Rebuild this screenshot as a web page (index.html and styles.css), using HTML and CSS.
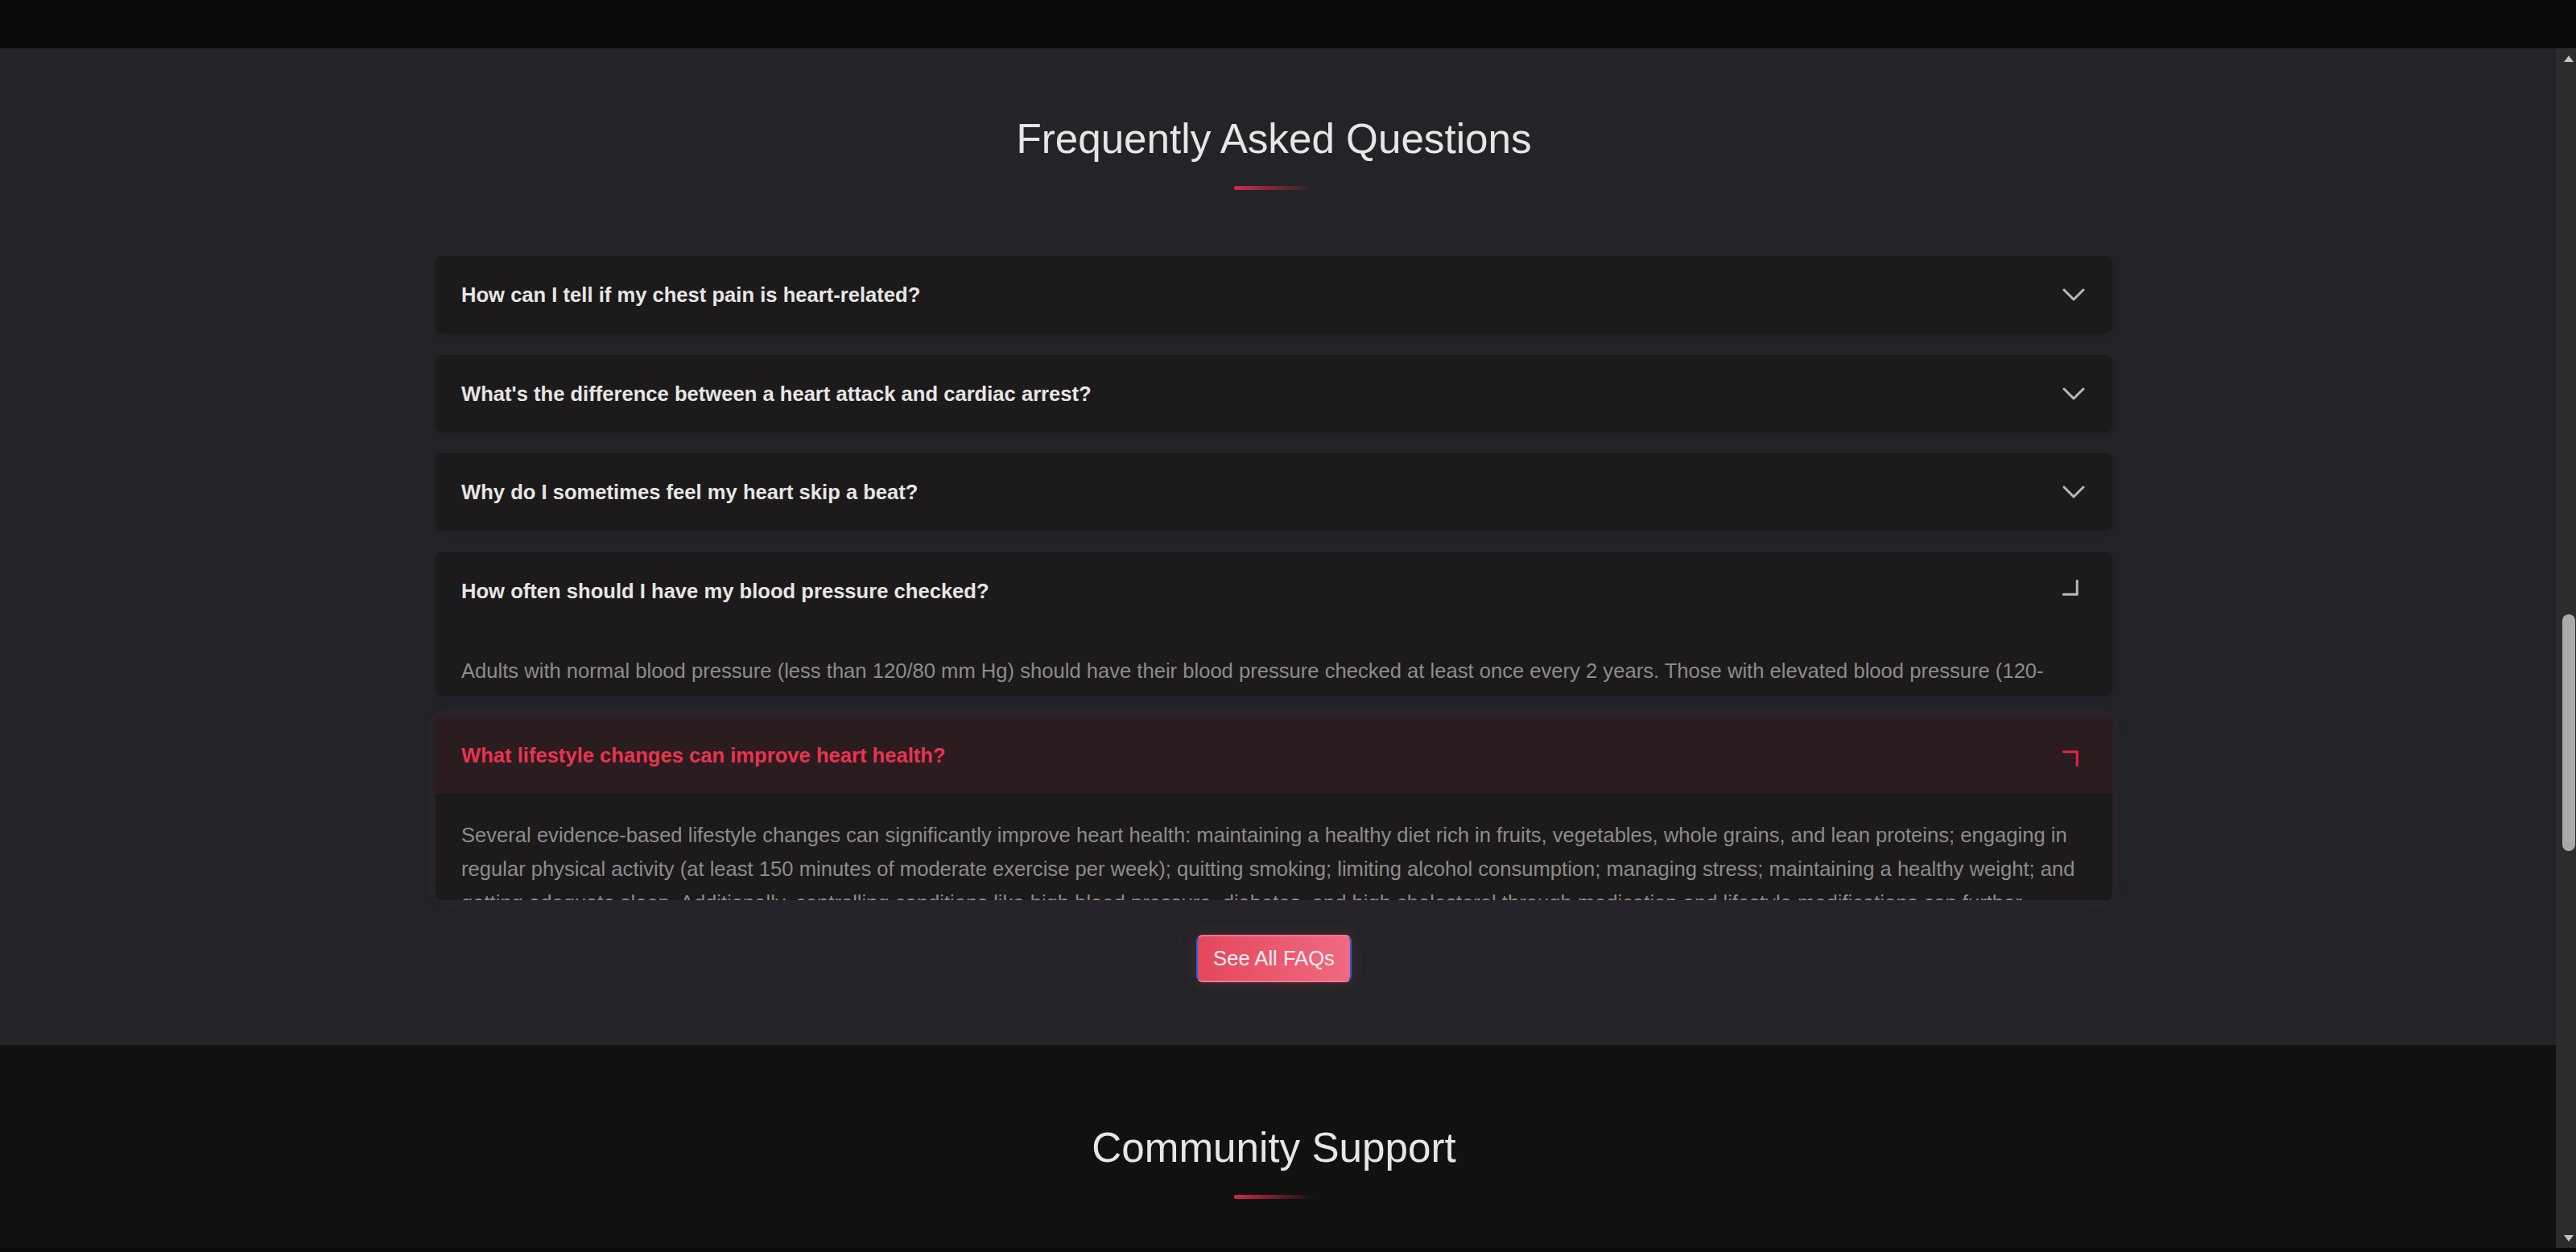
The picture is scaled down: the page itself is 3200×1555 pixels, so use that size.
FILE: index.html
```html
<!DOCTYPE html>
<html lang="en">
<head>
    <meta charset="UTF-8">
    <meta name="viewport" content="width=device-width, initial-scale=1.0">
    <title>Heart Health - FAQ</title>
    <link rel="stylesheet" href="styles.css">
</head>
<body>
    <div class="topbar"></div>

    <div class="viewport">
        <main class="page">
            <!-- FAQ Section -->
            <section class="faq">
                <h2 class="section-title">Frequently Asked Questions</h2>
                <div class="title-rule"></div>

                <div class="faq-list">
                    <div class="faq-item">
                        <div class="faq-question">
                            <span>How can I tell if my chest pain is heart-related?</span>
                            <svg class="faq-icon" viewBox="0 0 28 16" width="28" height="16"><polyline points="2,2 14,14 26,2"/></svg>
                        </div>
                    </div>

                    <div class="faq-item">
                        <div class="faq-question">
                            <span>What's the difference between a heart attack and cardiac arrest?</span>
                            <svg class="faq-icon" viewBox="0 0 28 16" width="28" height="16"><polyline points="2,2 14,14 26,2"/></svg>
                        </div>
                    </div>

                    <div class="faq-item">
                        <div class="faq-question">
                            <span>Why do I sometimes feel my heart skip a beat?</span>
                            <svg class="faq-icon" viewBox="0 0 28 16" width="28" height="16"><polyline points="2,2 14,14 26,2"/></svg>
                        </div>
                    </div>

                    <div class="faq-item">
                        <div class="faq-question">
                            <span>How often should I have my blood pressure checked?</span>
                            <svg class="faq-icon" viewBox="0 0 28 16" width="28" height="16" style="transform: rotate(-45deg)"><polyline points="2,2 14,14 26,2"/></svg>
                        </div>
                        <div class="faq-answer" style="max-height: 82px">
                            <p>Adults with normal blood pressure (less than 120/80 mm Hg) should have their blood pressure checked at least once every 2 years. Those with elevated blood pressure (120-129/less than 80 mm Hg) or hypertension should have it checked at least once a year, or as often as their doctor recommends.</p>
                        </div>
                    </div>

                    <div class="faq-item active">
                        <div class="faq-question">
                            <span>What lifestyle changes can improve heart health?</span>
                            <svg class="faq-icon" viewBox="0 0 28 16" width="28" height="16" style="transform: rotate(-135deg)"><polyline points="2,2 14,14 26,2"/></svg>
                        </div>
                        <div class="faq-answer" style="max-height: 132px">
                            <p>Several evidence-based lifestyle changes can significantly improve heart health: maintaining a healthy diet rich in fruits, vegetables, whole grains, and lean proteins; engaging in regular physical activity (at least 150 minutes of moderate exercise per week); quitting smoking; limiting alcohol consumption; managing stress; maintaining a healthy weight; and getting adequate sleep. Additionally, controlling conditions like high blood pressure, diabetes, and high cholesterol through medication and lifestyle modifications can further reduce your risk of heart disease.</p>
                        </div>
                    </div>
                </div>

                <a href="#" class="btn-more">See All FAQs</a>
            </section>

            <!-- Community Section -->
            <section class="community">
                <h2 class="section-title">Community Support</h2>
                <div class="title-rule"></div>
            </section>
        </main>

        <div class="scrollbar">
            <div class="scroll-arrow">
                <svg viewBox="0 0 14 10" width="14" height="10"><polygon points="7,1 13,9 1,9"/></svg>
            </div>
            <div class="scroll-track">
                <div class="scroll-thumb"></div>
            </div>
            <div class="scroll-arrow">
                <svg viewBox="0 0 14 10" width="14" height="10"><polygon points="1,1 13,1 7,9"/></svg>
            </div>
        </div>
    </div>

    <div class="bottombar"></div>
</body>
</html>
```

FILE: styles.css
```css
/* Global Styles */
* {
    box-sizing: border-box;
}

body {
    margin: 0;
    height: 1555px;
    display: flex;
    flex-direction: column;
    overflow: hidden;
    background: #0a0a0a;
    font-family: "Liberation Sans", Arial, sans-serif;
}

.topbar {
    flex: none;
    height: 60px;
    background: #0a0a0a;
}

.bottombar {
    flex: none;
    height: 5px;
    background: #0a0a0a;
}

.viewport {
    flex: 1;
    min-height: 0;
    display: flex;
}

.page {
    flex: 1;
    overflow: hidden;
    background: #121111;
}

/* Section Titles */
.section-title {
    margin: 0;
    font-size: 51.2px;
    line-height: 1.2;
    font-weight: 400;
    color: #e6e6e6;
}

.title-rule {
    width: 100px;
    height: 5px;
    margin-top: 28px;
    border-radius: 3px;
    background: linear-gradient(90deg, #d12a48, rgba(209, 42, 72, 0));
}

/* FAQ Section */
.faq {
    display: flex;
    flex-direction: column;
    align-items: center;
    padding: 82px 10px 78px 0;
    background: #222428;
}

.faq-list {
    width: 2083px;
    margin-top: 82px;
    display: flex;
    flex-direction: column;
    gap: 26.5px;
}

.faq-item {
    background: #1c1a1a;
    border-radius: 8px;
    overflow: hidden;
    box-shadow: 0 4px 12px rgba(0, 0, 0, 0.12);
}

.faq-question {
    display: flex;
    align-items: center;
    justify-content: space-between;
    padding: 32px 35px 32px 32px;
    font-size: 25.6px;
    font-weight: 700;
    line-height: 32px;
    color: #e6e6e6;
}

.faq-icon {
    flex: none;
    margin-right: -1px;
    color: #b9b9b9;
}

.faq-icon polyline {
    fill: none;
    stroke: currentColor;
    stroke-width: 3;
    stroke-linecap: round;
    stroke-linejoin: round;
}

.faq-answer {
    overflow: hidden;
    padding: 0 32px;
    font-size: 25.6px;
    line-height: 42px;
    color: #8c8c8c;
}

.faq-answer p {
    margin: 0;
    padding: 30px 0 32px;
}

/* Open item */
.faq-item.active {
    box-shadow: 0 0 24px rgba(230, 57, 80, 0.08);
}

.faq-item.active .faq-question {
    background: #2b1c20;
    color: #e8344f;
}

.faq-item.active .faq-icon {
    color: #e8204a;
}

/* See All button */
.btn-more {
    margin-top: 43px;
    padding: 12.8px 19.2px;
    font-size: 25.6px;
    line-height: 29px;
    color: #fff0f2;
    text-decoration: none;
    background: linear-gradient(90deg, #e5475c, #ef6a81);
    border: 2px solid #f07a8e;
    border-left-color: #2563d8;
    border-right-color: #2563d8;
    border-radius: 8px;
    box-shadow: 0 0 18px rgba(230, 57, 80, 0.25);
}

/* Community Section */
.community {
    display: flex;
    flex-direction: column;
    align-items: center;
    padding: 97px 10px 0 0;
    height: 400px;
    background: #121111;
}

/* Scrollbar */
.scrollbar {
    flex: none;
    width: 25px;
    display: flex;
    flex-direction: column;
    padding-left: 8px;
    background: #2b2d2c;
}

.scroll-arrow {
    height: 25px;
    display: flex;
    align-items: center;
    justify-content: center;
    width: 16px;
}

.scroll-arrow svg {
    fill: #c4c4c4;
}

.scroll-track {
    flex: 1;
}

.scroll-thumb {
    width: 16px;
    height: 294px;
    margin-top: 678px;
    border-radius: 8px;
    background: #a9a9a9;
}
```
